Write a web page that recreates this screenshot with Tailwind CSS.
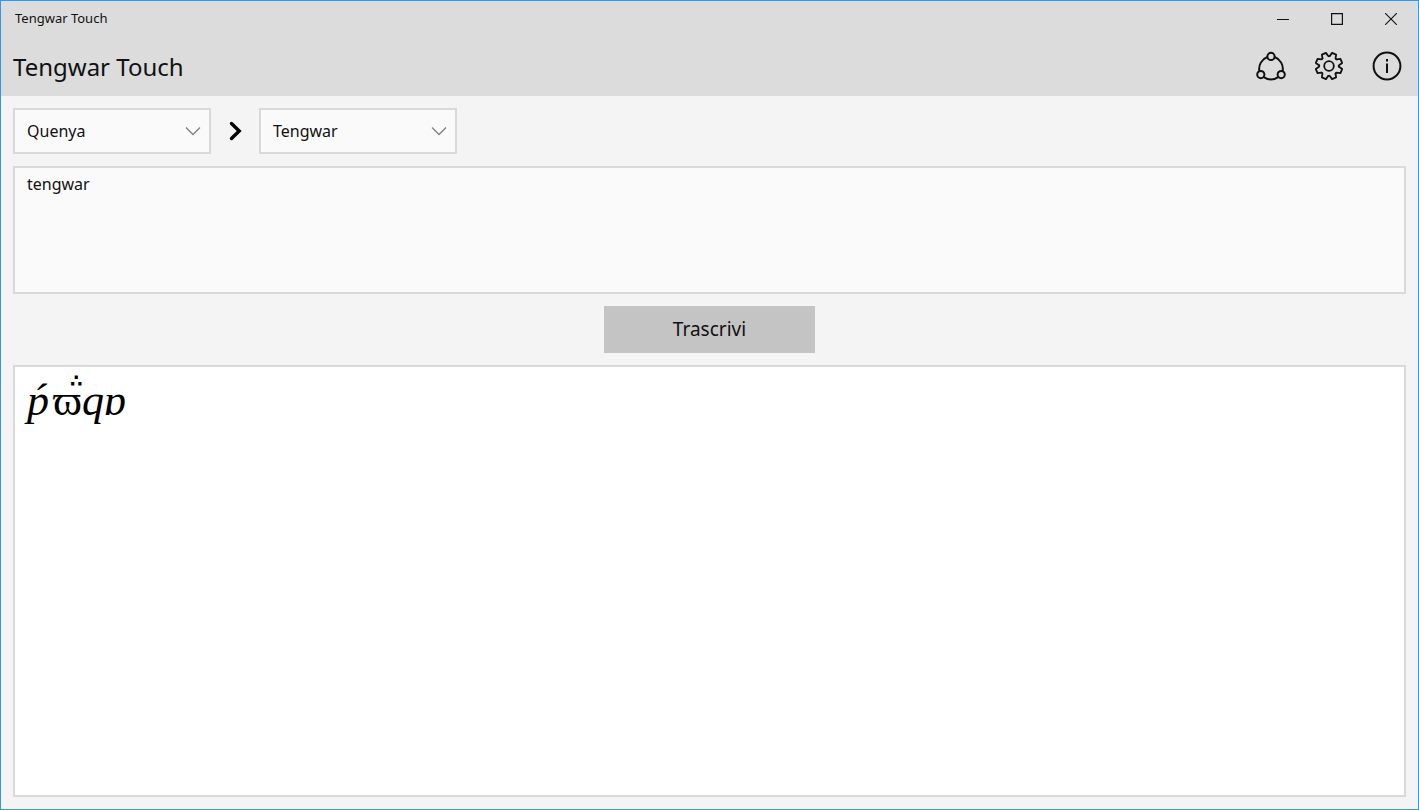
<!DOCTYPE html>
<html lang="it">
<head>
<meta charset="utf-8">
<title>Tengwar Touch</title>
<script src="https://cdn.jsdelivr.net/npm/@tailwindcss/browser@4"></script>
</head>
<body class="flex min-h-screen flex-col border border-[#3a96dd] bg-[#f4f4f4] font-['Noto_Sans','Open_Sans',sans-serif] text-[#111]">
<header class="bg-[#dcdcdc]">
  <div class="flex h-9 items-center justify-between">
    <span class="pl-3.5 text-[13px]">Tengwar Touch</span>
    <div class="flex">
      <button aria-label="Riduci a icona" class="flex h-9 w-[54px] items-center justify-center"><svg class="size-3" viewBox="0 0 12 12" stroke="#111"><path d="M0 6.5h12"/></svg></button>
      <button aria-label="Ingrandisci" class="flex h-9 w-[54px] items-center justify-center"><svg class="size-3" viewBox="0 0 12 12" fill="none" stroke="#111" stroke-width="1.2"><path d="M.6.6h10.8v10.8H.6z"/></svg></button>
      <button aria-label="Chiudi" class="flex h-9 w-[54px] items-center justify-center"><svg class="size-3" viewBox="0 0 12 12" stroke="#111" stroke-width="1.1"><path d="M0 0l12 12M12 0L0 12"/></svg></button>
    </div>
  </div>
  <div class="flex h-[59px] items-center justify-between pr-4 pl-3">
    <h1 class="text-2xl">Tengwar Touch</h1>
    <div class="flex gap-7 pb-0.5">
      <button aria-label="Condividi"><svg class="size-[30px]" viewBox="-15 -15 30 30" fill="none" stroke="#111" stroke-width="2"><circle cx="0" cy="-9.6" r="3.6"/><circle cx="-10.2" cy="8.6" r="3.6"/><circle cx="10.2" cy="8.6" r="3.6"/><path d="M-3.6-9A12.6 12.6 0 0 0-11.6 5.2M3.6-9A12.6 12.6 0 0 1 11.6 5.2M-7.2 11.2A13 13 0 0 0 7.2 11.2"/></svg></button>
      <button aria-label="Impostazioni"><svg class="size-[30px]" viewBox="-15 -15 30 30" fill="none" stroke="#111" stroke-width="1.8" stroke-linejoin="round" stroke-linecap="round">
        <defs><path id="tooth" d="M-3.1-9.6L-2.2-13.3H2.2L3.1-9.6Q3.5-8.6 4.6-8.98"/></defs>
        <circle r="4.8"/>
        <use href="#tooth" transform="rotate(22.5)"/><use href="#tooth" transform="rotate(67.5)"/><use href="#tooth" transform="rotate(112.5)"/><use href="#tooth" transform="rotate(157.5)"/><use href="#tooth" transform="rotate(202.5)"/><use href="#tooth" transform="rotate(247.5)"/><use href="#tooth" transform="rotate(292.5)"/><use href="#tooth" transform="rotate(337.5)"/>
      </svg></button>
      <button aria-label="Informazioni"><svg class="size-[30px]" viewBox="-15 -15 30 30" fill="none" stroke="#111" stroke-width="2"><circle r="13.4"/><path d="M0-7v2.4M0-2.6V7"/></svg></button>
    </div>
  </div>
</header>
<main class="flex flex-1 flex-col gap-3 p-3">
  <div class="flex items-center">
    <div class="relative">
      <select aria-label="Lingua" class="h-[46px] w-[198px] appearance-none border-2 border-[#d9d9d9] bg-[#fafafa] px-3 text-base"><option>Quenya</option></select>
      <svg class="pointer-events-none absolute top-[18px] right-2.5 h-2.5 w-4" viewBox="0 0 16 10" fill="none" stroke="#808080" stroke-width="1.3"><path d="M1 1.5l7 7 7-7"/></svg>
    </div>
    <svg class="mx-[17px] h-5 w-3.5" viewBox="0 0 14 20" fill="none" stroke="#000" stroke-width="3.4" stroke-linecap="round"><path d="M3.5 2.5L11.2 10L3.5 17.5" stroke-linejoin="miter"/></svg>
    <div class="relative">
      <select aria-label="Modo" class="h-[46px] w-[198px] appearance-none border-2 border-[#d9d9d9] bg-[#fafafa] px-3 text-base"><option>Tengwar</option></select>
      <svg class="pointer-events-none absolute top-[18px] right-2.5 h-2.5 w-4" viewBox="0 0 16 10" fill="none" stroke="#808080" stroke-width="1.3"><path d="M1 1.5l7 7 7-7"/></svg>
    </div>
  </div>
  <textarea aria-label="Testo" spellcheck="false" class="h-32 w-full resize-none border-2 border-[#d9d9d9] bg-[#fafafa] px-3 py-1 text-base">tengwar</textarea>
  <button class="h-[47px] w-[211px] self-center bg-[#c4c4c4] text-[19px]">Trascrivi</button>
  <output aria-label="Trascrizione" class="relative flex flex-1 items-start border-2 border-[#d9d9d9] bg-white px-3 font-['Liberation_Serif','DejaVu_Serif',serif] text-[44px]/[68px] text-black"><i class="pr-1">ṕ</i><span>ϖ</span><i>qɒ</i><span class="absolute top-1.5 left-[55px] font-['DejaVu_Sans',sans-serif] text-lg/4 font-bold">∴</span></output>
</main>
</body>
</html>
